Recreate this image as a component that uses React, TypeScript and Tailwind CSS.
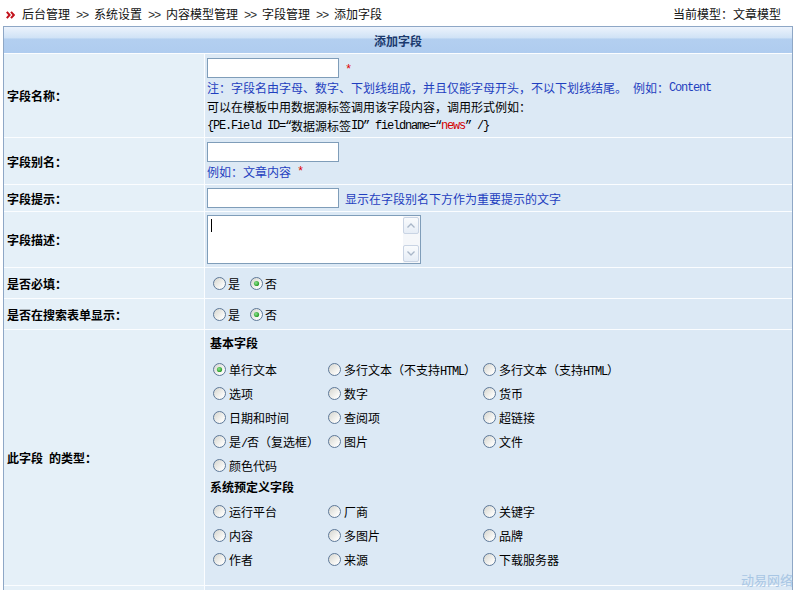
import React from "react";

type Kids = { children?: React.ReactNode };

// Half-width Latin text: 6px per character, like the CJK UI font's ASCII cells
function Mono({ children, className = "" }: Kids & { className?: string }) {
  return (
    <span className={`font-['Liberation_Mono',monospace] text-[12px] leading-[12px] tracking-[-1.2px] ${className}`}>
      {children}
    </span>
  );
}

function Sp() {
  return <span className="inline-block w-[6px]" />;
}

function Radio({ checked = false }: { checked?: boolean }) {
  return (
    <svg width="13" height="13" viewBox="0 0 13 13" className="shrink-0">
      <defs>
        <linearGradient id="radioFill" x1="0" y1="0" x2="1" y2="1">
          <stop offset="0" stopColor="#d3d3cc" />
          <stop offset="0.7" stopColor="#f8f8f6" />
          <stop offset="1" stopColor="#ffffff" />
        </linearGradient>
        <radialGradient id="radioDot" cx="0.4" cy="0.4" r="0.65">
          <stop offset="0" stopColor="#8ee58e" />
          <stop offset="1" stopColor="#1f951f" />
        </radialGradient>
      </defs>
      <circle cx="6.5" cy="6.5" r="6" fill="url(#radioFill)" stroke="#5d7898" strokeWidth="1" />
      {checked && <circle cx="6.5" cy="6.5" r="2.6" fill="url(#radioDot)" />}
    </svg>
  );
}

function Option({ checked, children }: Kids & { checked?: boolean }) {
  return (
    <label className="flex h-[24px] items-center">
      <Radio checked={checked} />
      <span className="ml-[3px] whitespace-nowrap">{children}</span>
    </label>
  );
}

function YesNo() {
  return (
    <div className="flex items-center pl-[8px]">
      <Radio />
      <span className="ml-[2px]">是</span>
      <span className="ml-[10px]" />
      <Radio checked />
      <span className="ml-[2px]">否</span>
    </div>
  );
}

function Row({ h, label, children, center = true }: Kids & { h: string; label: React.ReactNode; center?: boolean }) {
  return (
    <div className={`flex gap-px ${h}`}>
      <div className="flex w-[200px] shrink-0 items-center bg-[#e5f0f8] pl-[3px] font-bold">{label}</div>
      <div className={`flex flex-1 bg-[#dce9f5] ${center ? "items-center" : "items-start"}`}>{children}</div>
    </div>
  );
}

function TextBox() {
  return <input readOnly className="h-[20px] w-[132px] border border-[#7f9db9] bg-white outline-none" />;
}

function ScrollButton({ up }: { up?: boolean }) {
  return (
    <div className="flex h-[17px] w-[16px] items-center justify-center rounded-[2px] border border-[#c9d4e4] bg-[linear-gradient(to_bottom,#f9fbfd,#e6edf6)]">
      <svg width="8" height="5" viewBox="0 0 8 5">
        <polyline
          points={up ? "0.5,4.5 4,1 7.5,4.5" : "0.5,0.5 4,4 7.5,0.5"}
          fill="none"
          stroke="#a9b6c8"
          strokeWidth="1.3"
        />
      </svg>
    </div>
  );
}

function TextArea() {
  return (
    <div className="flex h-[49px] w-[214px] border border-[#7f9db9] bg-white">
      <div className="flex-1 pl-[3px] pt-[3px]">
        <div className="h-[13px] w-px bg-black" />
      </div>
      <div className="flex w-[17px] flex-col justify-between bg-[#f5f7fa] py-px">
        <ScrollButton up />
        <ScrollButton />
      </div>
    </div>
  );
}

const basic: { text: React.ReactNode; checked?: boolean }[] = [
  { text: "单行文本", checked: true },
  { text: <>多行文本（不支持<Mono>HTML</Mono>）</> },
  { text: <>多行文本（支持<Mono>HTML</Mono>）</> },
  { text: "选项" },
  { text: "数字" },
  { text: "货币" },
  { text: "日期和时间" },
  { text: "查阅项" },
  { text: "超链接" },
  { text: <>是<Mono>/</Mono>否（复选框）</> },
  { text: "图片" },
  { text: "文件" },
  { text: "颜色代码" },
];

const system = ["运行平台", "厂商", "关键字", "内容", "多图片", "品牌", "作者", "来源", "下载服务器"];

function Crumb() {
  const items = ["后台管理", "系统设置", "内容模型管理", "字段管理", "添加字段"];
  return (
    <div className="flex items-center">
      <svg width="9" height="8" viewBox="0 0 9 8" className="mt-[3px]">
        <polyline points="0.8,0.8 3.6,4 0.8,7.2" fill="none" stroke="#c2121c" strokeWidth="2" />
        <polyline points="5,0.8 7.8,4 5,7.2" fill="none" stroke="#c2121c" strokeWidth="2" />
      </svg>
      <div className="ml-[7px] flex items-center">
        {items.map((t, i) => (
          <React.Fragment key={t}>
            {i > 0 && (
              <span className="w-[24px] text-center">
                <Mono className="text-[#333]">&gt;&gt;</Mono>
              </span>
            )}
            <span>{t}</span>
          </React.Fragment>
        ))}
      </div>
    </div>
  );
}

export default function App() {
  return (
    <div className="relative min-h-[590px] w-[797px] bg-white font-['Noto_Sans_CJK_SC','Noto_Sans_CJK_JP',sans-serif] text-[12px] leading-[19px] text-black">
      <div className="flex h-[26px] items-center pl-[6px] pr-[16px] text-[#111]">
        <Crumb />
        <div className="ml-auto">当前模型：文章模型</div>
      </div>

      <div className="ml-[3px] flex w-[790px] flex-col gap-px border-x border-t border-[#8ea7c6] bg-[#fbfdff]">
        <div className="flex h-[26px] items-center justify-center bg-[linear-gradient(to_bottom,#ecf3fc_0%,#d0e2f6_42%,#b3cff0_46%,#afccef_100%)] font-bold text-[#1b3a6e]">
          添加字段
        </div>

        <Row h="h-[83px]" label="字段名称：" center={false}>
          <div className="flex flex-col pl-[2px] pt-[4px]">
            <div className="flex h-[20px] items-center">
              <TextBox />
              <Mono className="ml-[6px] mt-[3px] text-[#e00000]">*</Mono>
            </div>
            <div className="flex h-[19px] items-center whitespace-nowrap text-[#1f3fbf]">
              <span>注：字段名由字母、数字、下划线组成，并且仅能字母开头，不以下划线结尾。</span>
              <Sp />
              <span>例如：</span>
              <Mono>Content</Mono>
            </div>
            <div className="flex h-[19px] items-center">可以在模板中用数据源标签调用该字段内容，调用形式例如：</div>
            <div className="flex h-[19px] items-center whitespace-nowrap">
              <Mono>{"{PE.Field ID=“"}</Mono>
              <span>数据源标签</span>
              <Mono>{"ID” fieldname=“"}</Mono>
              <Mono className="text-[#d40000]">news</Mono>
              <Mono>{"” /}"}</Mono>
            </div>
          </div>
        </Row>

        <Row h="h-[46px]" label="字段别名：" center={false}>
          <div className="flex flex-col pl-[2px] pt-[4px]">
            <TextBox />
            <div className="flex h-[19px] items-center text-[#1f3fbf]">
              <span>例如：文章内容</span>
              <Sp />
              <Mono className="text-[#e00000]">*</Mono>
            </div>
          </div>
        </Row>

        <Row h="h-[26px]" label="字段提示：">
          <div className="flex items-center pl-[2px]">
            <TextBox />
            <span className="ml-[6px] text-[#1f3fbf]">显示在字段别名下方作为重要提示的文字</span>
          </div>
        </Row>

        <Row h="h-[55px]" label="字段描述：">
          <div className="pl-[2px]">
            <TextArea />
          </div>
        </Row>

        <Row h="h-[30px]" label="是否必填：">
          <YesNo />
        </Row>

        <Row h="h-[30px]" label="是否在搜索表单显示：">
          <YesNo />
        </Row>

        <Row
          h="h-[255px]"
          center={false}
          label={
            <>
              此字段
              <Sp />
              的类型：
            </>
          }
        >
          <div className="flex flex-col pt-[3px]">
            <div className="h-[20px] pl-[5px] leading-[20px] font-bold">基本字段</div>
            <div className="mt-[4px] grid grid-cols-[115px_155px_160px] pl-[8px]">
              {basic.map((o, i) => (
                <Option key={i} checked={o.checked}>
                  {o.text}
                </Option>
              ))}
            </div>
            <div className="h-[20px] pl-[5px] leading-[20px] font-bold">系统预定义字段</div>
            <div className="mt-[2px] grid grid-cols-[115px_155px_160px] pl-[8px]">
              {system.map((t) => (
                <Option key={t}>{t}</Option>
              ))}
            </div>
          </div>
        </Row>

        <Row h="h-[30px]" label="">
          <div />
        </Row>
      </div>

      <div className="absolute right-[4px] top-[572px] text-[13px] leading-[16px] text-[#a8c6e4]">动易网络</div>
    </div>
  );
}
